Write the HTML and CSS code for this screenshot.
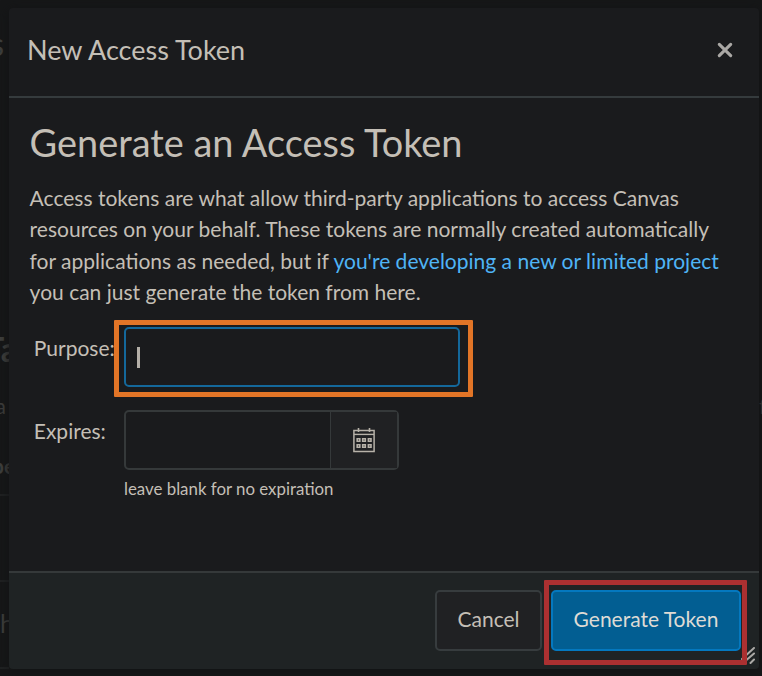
FILE: index.html
```html
<!DOCTYPE html>
<html lang="en">
<head>
<meta charset="utf-8">
<title>New Access Token</title>
<link rel="stylesheet" href="styles.css">
</head>
<body>
<div class="backdrop" aria-hidden="true">
  <span class="ghost ghost-title">s</span>
  <span class="ghost ghost-heading">Ta</span>
  <span class="ghost ghost-text">a</span>
  <span class="ghost ghost-column">pe</span>
  <span class="ghost ghost-cell">h</span>
  <span class="ghost ghost-right">f</span>
  <i class="rule rule-a"></i><i class="rule rule-b"></i><i class="rule rule-c"></i>
</div>
<div class="dialog" role="dialog">
  <header class="dialog-header">
    <span class="dialog-title">New Access Token</span>
    <button class="close" aria-label="Close">
      <svg width="16" height="16" viewBox="0 0 16 16"><path d="M2.3 2.3 13.7 13.7M13.7 2.3 2.3 13.7"/></svg>
    </button>
  </header>
  <main class="dialog-body">
    <h2>Generate an Access Token</h2>
    <p>Access tokens are what allow third-party applications to access Canvas<br>resources on your behalf. These tokens are normally created automatically<br>for applications as needed, but if <a>you're developing a new or limited project</a><br>you can just generate the token from here.</p>
    <div class="row">
      <label>Purpose:</label>
      <div class="input focused"><i class="caret"></i></div>
    </div>
    <div class="row row-expires">
      <label>Expires:</label>
      <div>
        <div class="date">
          <div class="date-input"></div>
          <button class="date-button" aria-label="Pick a date">
            <svg width="22" height="25" viewBox="0 0 22 25">
              <path class="frame" d="M.9 2.4H21.1V23.6H.9Z"/>
              <path class="band" d="M1 6.4H21"/>
              <path class="ring" d="M5.5 0V4M16.5 0V4"/>
              <path class="cells" d="M4.2 10.7h2.6v2.6H4.2zM9.7 10.7h2.6v2.6H9.7zM15.4 10.7H18v2.6h-2.6zM4.2 16.7h2.6v2.6H4.2zM9.7 16.7h2.6v2.6H9.7zM15.4 16.7H18v2.6h-2.6z"/>
            </svg>
          </button>
        </div>
        <div class="hint">leave blank for no expiration</div>
      </div>
    </div>
  </main>
  <footer class="dialog-footer">
    <button class="btn">Cancel</button>
    <button class="btn primary">Generate Token</button>
    <svg class="grip" width="15" height="18" viewBox="0 0 15 18"><path d="M1 12 13 1M2 16 13 6.5M9.5 16 13 12.5"/></svg>
  </footer>
</div>
<div class="mark mark-purpose"></div>
<div class="mark mark-submit"></div>
</body>
</html>
```
FILE: styles.css
```css
* { box-sizing: border-box; }
body {
  margin: 0;
  width: 762px;
  height: 676px;
  overflow: hidden;
  position: relative;
  padding: 8px 3px 8px 9px;
  background: #161718;
  color: #c4bfb6;
  font: 21px/31.4px Lato, sans-serif;
}
button { font: inherit; color: inherit; padding: 0; margin: 0; }
.backdrop { position: absolute; inset: 0; color: #40403e; }
.ghost { position: absolute; line-height: 1; white-space: nowrap; }
.ghost-title { right: 758px; top: 28px; font-size: 32px; }
.ghost-heading { left: -16px; top: 332px; font-size: 34px; font-weight: 700; }
.ghost-text { right: 756px; top: 395px; font-size: 21px; }
.ghost-column { left: -8px; top: 455px; font-size: 21px; font-weight: 700; }
.ghost-cell { left: 0; top: 611px; font-size: 25px; }
.ghost-right { left: 759px; top: 395px; font-size: 21px; }
.rule { position: absolute; left: 0; width: 9px; height: 2px; background: #202223; }
.rule-a { top: 494px; }
.rule-b { top: 580px; }
.rule-c { top: 667px; }
.dialog {
  position: relative;
  width: 750px;
  height: 661px;
  display: flex;
  flex-direction: column;
  background: #1a1b1d;
  border-radius: 4px;
  overflow: hidden;
  box-shadow: 0 2px 12px #121314;
}
.dialog-header {
  height: 90px;
  display: flex;
  align-items: center;
  justify-content: space-between;
  padding: 0 26.5px 4.4px 18px;
  border-bottom: 2px solid #353b3d;
}
.dialog-title { font-size: 27px; }
.close { display: flex; background: none; border: 0; }
.close svg { stroke: #aaa8a5; stroke-width: 3.1; stroke-linecap: round; }
.dialog-body { flex: 1; padding: 18px 20px 0 20.6px; }
h2 { margin: 0 0 12px; font-size: 37.9px; line-height: 54px; font-weight: 400; }
p { margin: 0; white-space: nowrap; font-size: 21.02px; }
a { color: #4fb4f5; }
.row { display: flex; margin-top: 19.4px; height: 61px; }
.row label { width: 94.4px; padding-left: 4.2px; margin-top: 5px; }
.row-expires { margin-top: 22px; }
.input {
  width: 336px;
  height: 60px;
  border: 2px solid #14689b;
  border-radius: 5px;
  padding: 18px 0 0 11px;
}
.caret { display: block; width: 3px; height: 21px; background: #b5b0a8; }
.date { display: flex; width: 275px; height: 60px; border: 2px solid #35393a; border-radius: 5px; }
.date-input { flex: 1; }
.date-button {
  width: 67px;
  display: flex;
  align-items: center;
  justify-content: center;
  border: 0;
  border-left: 1px solid #35393a;
  background: #202123;
}
.date-button svg { fill: none; stroke: #b7b2a9; }
.frame { stroke-width: 1.5; }
.band { stroke-width: 1.4; }
.ring { stroke-width: 1.6; }
.cells { stroke-width: 1.6; }
.hint { font-size: 16.85px; line-height: 24px; margin-top: 7px; }
.dialog-footer {
  position: relative;
  height: 98px;
  display: flex;
  justify-content: flex-end;
  gap: 9px;
  padding: 17px 18px 0;
  background: #1f2324;
  border-top: 2px solid #35393a;
}
.btn { height: 61px; width: 107px; padding-bottom: 3px; border: 2px solid #373c3e; border-radius: 5px; background: #202123; }
.btn.primary { width: 190px; background: #025e92; border-color: #0478bf; color: #dedbd5; }
.grip { position: absolute; right: 3px; bottom: 4px; fill: none; stroke: #aaa8a5; stroke-width: 2; stroke-linecap: round; }
.mark { position: absolute; border: 5px solid; border-radius: 1px; pointer-events: none; }
.mark-purpose { left: 114px; top: 320px; width: 359px; height: 77px; border-color: #e27527; }
.mark-submit { left: 544px; top: 580px; width: 203px; height: 85px; border-color: #ab3031; }
```
